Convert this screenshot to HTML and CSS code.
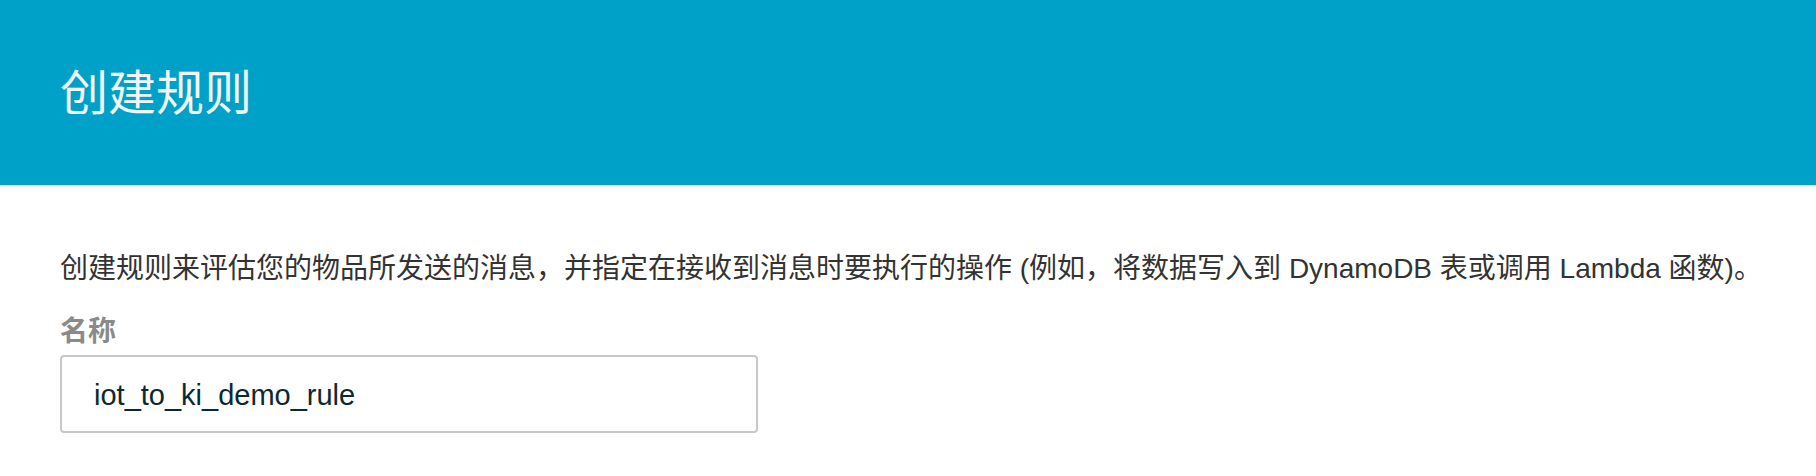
FILE: index.html
```html
<!DOCTYPE html>
<html lang="zh-CN">
<head>
<meta charset="utf-8">
<title>创建规则</title>
<link rel="stylesheet" href="styles.css">
</head>
<body>
<header class="page-header">
  <h1 class="page-title">创建规则</h1>
</header>
<main class="content">
  <p class="description">创建规则来评估您的物品所发送的消息，并指定在接收到消息时要执行的操作 (例如，将数据写入到 DynamoDB 表或调用 Lambda 函数)。</p>
  <div class="field">
    <label class="field-label" for="rule-name">名称</label>
    <input class="text-input" id="rule-name" type="text" value="iot_to_ki_demo_rule">
  </div>
</main>
</body>
</html>
```

FILE: styles.css
```css
html, body {
  margin: 0;
  padding: 0;
  background: #ffffff;
}

body {
  font-family: "Liberation Sans", "Noto Sans CJK SC", sans-serif;
}

.page-header {
  box-sizing: border-box;
  height: 185px;
  background: #00a1c9;
  padding: 64px 0 0 60px;
}

.page-title {
  margin: 0;
  font-size: 48px;
  line-height: 60px;
  font-weight: 400;
  color: #f4f5f5;
}

.content {
  padding: 64px 0 0 60px;
}

.description {
  margin: 0;
  font-size: 28px;
  line-height: 40px;
  color: #333333;
}

.field {
  display: flex;
  flex-direction: column;
  gap: 3px;
  margin-top: 23px;
}

.field-label {
  font-size: 28px;
  line-height: 40px;
  font-weight: 700;
  color: #8a8a8a;
}

.text-input {
  box-sizing: border-box;
  width: 698px;
  height: 78px;
  margin: 0;
  padding: 3px 0 0 32px;
  border: 2px solid #c8c8c8;
  border-radius: 4px;
  background: #ffffff;
  font-family: "Liberation Sans", "Noto Sans CJK SC", sans-serif;
  font-size: 29px;
  color: #0b2932;
  outline: none;
}
```
